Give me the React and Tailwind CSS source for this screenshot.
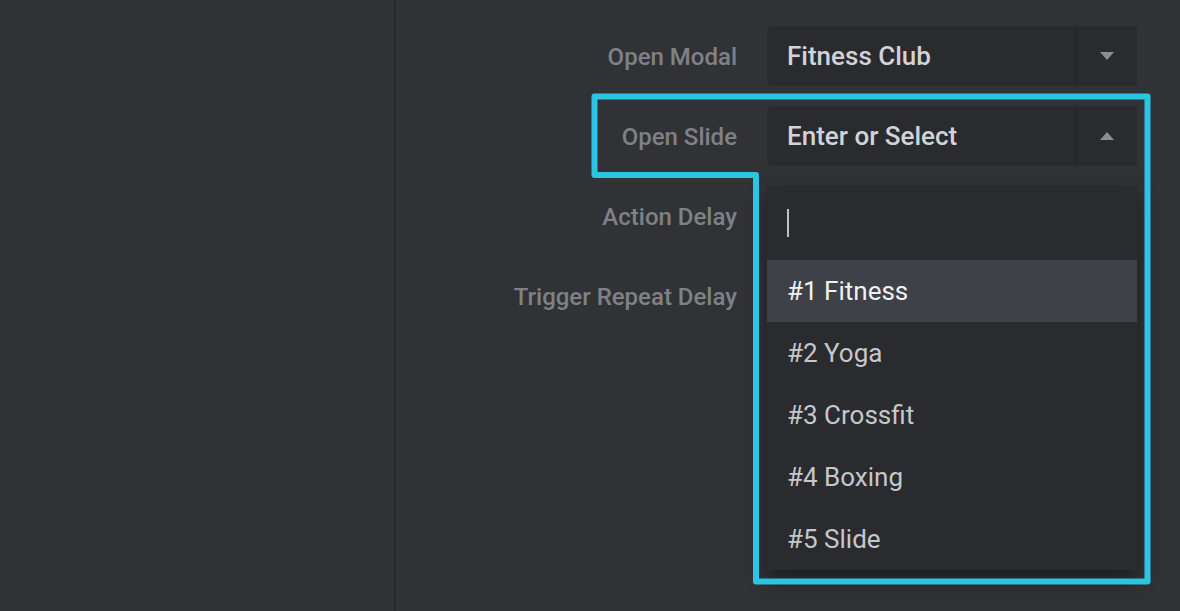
const items = ["#1 Fitness", "#2 Yoga", "#3 Crossfit", "#4 Boxing", "#5 Slide"];

function Caret({ up }) {
  return (
    <svg width="14" height="8" viewBox="0 0 14 8" className="text-[#8c8d92]">
      {up ? <path d="M0 8 L7 0 L14 8 Z" fill="currentColor" /> : <path d="M0 0 L14 0 L7 8 Z" fill="currentColor" />}
    </svg>
  );
}

function Select({ value, open, children }) {
  return (
    <div className="relative h-[60px]">
      <div className="flex h-full rounded-l-[5px] bg-[#2a2b2f]">
        <div className="flex flex-1 items-center pl-[20px] text-[26px] font-medium text-[#d2d3d6]">
          {value}
        </div>
        <div className="flex w-[62px] items-center justify-center border-l-2 border-[#26272a]">
          <Caret up={open} />
        </div>
      </div>
      {children}
    </div>
  );
}

function Label({ children }) {
  return (
    <div className="flex h-[60px] items-center justify-end pt-[1px] text-[24px] font-medium text-[#7f8186]">
      {children}
    </div>
  );
}

export default function App() {
  return (
    <div className="relative flex h-[611px] w-full overflow-hidden bg-[#313236] font-['Roboto',sans-serif]">
      <div className="w-[396px] shrink-0 border-r-2 border-[#28292c]" />

      <div className="flex-1 pt-[26px]">
        <div className="grid grid-cols-[341px_370px] gap-x-[30px] gap-y-[20px]">
          <Label>Open Modal</Label>
          <Select value="Fitness Club" />

          <Label>Open Slide</Label>
          <Select value="Enter or Select" open>
            <div className="absolute left-0 top-[calc(100%+20px)] z-10 w-full bg-[#2a2b2f] shadow-[0_10px_18px_rgba(0,0,0,0.4)]">
              <div className="flex h-[74px] items-center pl-[20px]">
                <div className="h-[28px] w-[2px] bg-[#bfc0c3]" />
              </div>
              {items.map((item, i) => (
                <div
                  key={item}
                  className={
                    i === 0
                      ? "flex h-[62px] items-center bg-[#3e4148] pl-[20px] text-[26px] text-[#f1f1f2]"
                      : "flex h-[62px] items-center pl-[20px] text-[26px] text-[#c6c7ca]"
                  }
                >
                  {item}
                </div>
              ))}
            </div>
          </Select>

          <Label>Action Delay</Label>
          <div />

          <Label>Trigger Repeat Delay</Label>
          <div />
        </div>
      </div>

      <svg
        className="pointer-events-none absolute left-0 top-0 z-20"
        width="1180"
        height="611"
        viewBox="0 0 1180 611"
      >
        <path
          d="M594.5 96.5 H1147.5 V581.5 H756 V175 H594.5 Z"
          fill="none"
          stroke="#2bc4e2"
          strokeWidth="6"
          strokeLinejoin="round"
        />
      </svg>
    </div>
  );
}
